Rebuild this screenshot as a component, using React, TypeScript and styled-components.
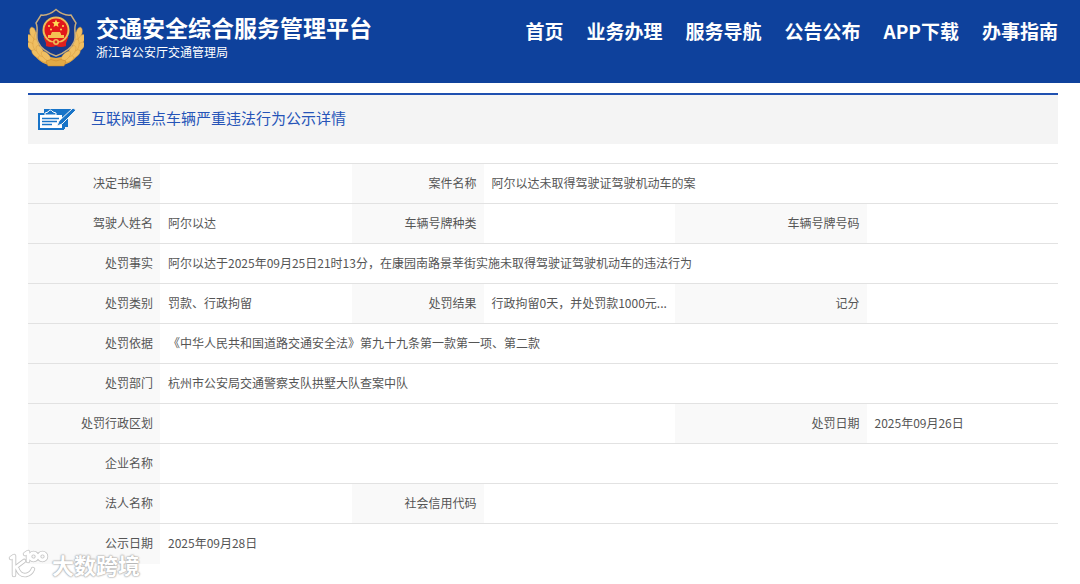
import React from 'react';
import styled, { createGlobalStyle } from 'styled-components';

const GlobalStyle = createGlobalStyle`
  *, *::before, *::after { box-sizing: border-box; }
  body {
    margin: 0;
    background: #fff;
    color: #555;
    font-family: "Noto Sans CJK SC", "Noto Sans", sans-serif;
    font-size: 12px;
    line-height: 16px;
  }
`;

const Page = styled.div`
  position: relative;
  padding-bottom: 22px;
`;

const Header = styled.header`
  display: flex;
  justify-content: space-between;
  align-items: flex-start;
  min-height: 83px;
  padding: 8px 22px 8px 28px;
  background: #0e419c;
  color: #fff;
`;

const Brand = styled.div`
  display: flex;
  gap: 12px;
`;

const BrandText = styled.div`
  padding-top: 3px;
`;

const SiteName = styled.h1`
  margin: 0;
  font-size: 23px;
  line-height: 32px;
  font-weight: 700;
  white-space: nowrap;
`;

const Agency = styled.p`
  margin: 0;
  line-height: 18px;
`;

const Nav = styled.nav`
  display: flex;
  gap: 23px;
  padding-top: 9px;
`;

const NavLink = styled.a`
  color: #fff;
  font-size: 19px;
  line-height: 28px;
  font-weight: 700;
  text-decoration: none;
  white-space: nowrap;
`;

const Main = styled.main`
  padding: 10px 22px 0 28px;
`;

const TitleBar = styled.div`
  display: flex;
  align-items: center;
  gap: 14px;
  height: 51px;
  margin-bottom: 19px;
  padding: 0 9px 2px;
  border-top: 2px solid #1f50b0;
  background: #f4f4f4;
`;

const PageTitle = styled.h2`
  margin: 0;
  padding-bottom: 2px;
  color: #2654b8;
  font-size: 15px;
  line-height: 24px;
  font-weight: 400;
`;

const Table = styled.table`
  width: 100%;
  table-layout: fixed;
  border-collapse: collapse;
`;

const Col = styled.col<{ $narrow: boolean }>`
  width: ${(p) => (p.$narrow ? '132px' : 'auto')};
`;

const Row = styled.tr`
  height: 40px;
  border-top: 1px solid #e2e2e2;
`;

const Label = styled.th`
  padding: 0 7px 1px;
  background: #f9f9f9;
  font-weight: 400;
  text-align: right;
`;

const Value = styled.td`
  padding: 0 4px 1px 8px;
  overflow: hidden;
  text-overflow: ellipsis;
  white-space: nowrap;
`;

const Watermark = styled.div`
  position: absolute;
  left: 6px;
  bottom: 6px;
  display: flex;
  align-items: center;
  gap: 2px;
  color: #fff;
  font-size: 22px;
  line-height: 22px;
  font-weight: 700;
  text-shadow: 0 0 1px #aaa, 0 0 2px #aaa, 0 0 2px #aaa;
`;

const navItems = ['首页', '业务办理', '服务导航', '公告公布', 'APP下载', '办事指南'];
const narrowColumns = [true, false, true, false, false, false];

type Field = { label: string; value?: string; span?: number };

const rows: Field[][] = [
  [{ label: '决定书编号' }, { label: '案件名称', value: '阿尔以达未取得驾驶证驾驶机动车的案', span: 3 }],
  [{ label: '驾驶人姓名', value: '阿尔以达' }, { label: '车辆号牌种类' }, { label: '车辆号牌号码' }],
  [{ label: '处罚事实', value: '阿尔以达于2025年09月25日21时13分，在康园南路景莘街实施未取得驾驶证驾驶机动车的违法行为', span: 5 }],
  [{ label: '处罚类别', value: '罚款、行政拘留' }, { label: '处罚结果', value: '行政拘留0天，并处罚款1000元...' }, { label: '记分' }],
  [{ label: '处罚依据', value: '《中华人民共和国道路交通安全法》第九十九条第一款第一项、第二款', span: 5 }],
  [{ label: '处罚部门', value: '杭州市公安局交通警察支队拱墅大队查案中队', span: 5 }],
  [{ label: '处罚行政区划', span: 3 }, { label: '处罚日期', value: '2025年09月26日' }],
  [{ label: '企业名称', span: 5 }],
  [{ label: '法人名称' }, { label: '社会信用代码', span: 3 }],
  [{ label: '公示日期', value: '2025年09月28日', span: 5 }],
];

const leaves = [
  [5, 25, -15], [3, 32, -30], [4, 39, -42], [9, 46, -55], [16, 51, -70],
  [9, 30, 5], [8, 37, -10], [12, 43, -30], [18, 48, -45],
];

function LeafBranch() {
  return (
    <>
      <path d="M6 24C5 40 13 48 28 50V58C12 58 1 46 3 29Z" fill="#e3a944" />
      {leaves.map(([x, y, angle]) => (
        <ellipse key={`${x}-${y}`} cx={x} cy={y} rx="3" ry="6" transform={`rotate(${angle} ${x} ${y})`} fill="#f0bf62" stroke="#d39439" strokeWidth=".4" />
      ))}
    </>
  );
}

function PoliceEmblem() {
  return (
    <svg width="56" height="60" viewBox="0 0 56 60" aria-hidden="true">
      <LeafBranch />
      <g transform="matrix(-1 0 0 1 56 0)"><LeafBranch /></g>
      <path d="M28 1.5C23 6 17 7.5 13 7L8 15C11 21 7 28 10 34C13 41 20 45 28 48C36 45 43 41 46 34C49 28 45 21 48 15L43 7C39 7.5 33 6 28 1.5Z" fill="#173a8a" stroke="#c9ac7c" strokeWidth="1.5" />
      <path d="M17 30H39L37 35V37L33 36L31 37H25L23 36L19 37V35Z" fill="#d9261f" stroke="#d9261f" strokeWidth="2" />
      <circle cx="28" cy="22" r="13.500" fill="#eebe58" />
      <circle cx="28" cy="22" r="11.500" fill="#e2181b" />
      <path d="M28 11.5l1.100 2.600 2.900.2-2.200 1.800.7 2.800-2.500-1.500-2.500 1.500.7-2.800-2.200-1.800 2.900-.2Z" fill="#ffdc55" />
      <g fill="#ffdc55"><circle cx="21" cy="18" r="1" /><circle cx="23" cy="21.500" r="1" /><circle cx="33" cy="21.500" r="1" /><circle cx="35" cy="18" r="1" /></g>
      <path d="M23 26L24 24H32L33 26V27H36V30H20V27H23Z" fill="#f4c253" />
      <path d="M18 33Q23 36 28 33Q33 36 38 33V38Q33 40 28 38Q23 40 18 38Z" fill="#df201e" />
      <circle cx="28" cy="34" r="3" fill="#eebe58" />
      <circle cx="28" cy="34" r="1.400" fill="#d9261f" />
      <path d="M18 53Q23 50 28 53Q33 50 38 53L36 58H20Z" fill="#e3aa46" stroke="#c98327" strokeWidth=".5" />
    </svg>
  );
}

function FormIcon() {
  return (
    <svg width="40" height="24" viewBox="0 0 40 24" aria-hidden="true">
      <path d="M7 2H35L31 8V20H28V22H7Z" fill="#1874c8" />
      <path d="M2 7H26V22H2Z" fill="#fff" stroke="#1874c8" strokeWidth="2" />
      <path d="M8 8V6L11 5Q13 1 16 5L19 6V8Z" fill="#1874c8" stroke="#fff" strokeWidth="1" />
      <path d="M5 11.500H22M5 14.500H20M5 17.500H15" stroke="#1874c8" strokeWidth="1.300" />
      <path d="M20 19L22 14L36 1L39 3L25 17Z" fill="#1874c8" stroke="#f4f4f4" strokeWidth="1" />
    </svg>
  );
}

function WatermarkLogo() {
  const lines = 'M5 10L8 8V27M18 13L10 19M11 20Q14 28 20 27Q25 26 27 21M19 6L22 4V13M24 8.5A3.500 3.500 0 1 1 31 8.5A3.500 3.500 0 1 1 24 8.5M33 8.5A3.500 3.500 0 1 1 40 8.5A3.500 3.500 0 1 1 33 8.5M30 6L34 11M34 6L30 11';
  return (
    <svg width="44" height="32" viewBox="0 0 44 32" fill="none" strokeLinecap="round" strokeLinejoin="round" aria-hidden="true">
      <path d={lines} stroke="#c4c4c4" strokeWidth="4.500" />
      <path d={lines} stroke="#fff" strokeWidth="2.800" />
    </svg>
  );
}

export default function App() {
  return (
    <Page>
      <GlobalStyle />
      <Header>
        <Brand>
          <PoliceEmblem />
          <BrandText>
            <SiteName>交通安全综合服务管理平台</SiteName>
            <Agency>浙江省公安厅交通管理局</Agency>
          </BrandText>
        </Brand>
        <Nav>
          {navItems.map((item) => <NavLink key={item} href="#">{item}</NavLink>)}
        </Nav>
      </Header>
      <Main>
        <TitleBar>
          <FormIcon />
          <PageTitle>互联网重点车辆严重违法行为公示详情</PageTitle>
        </TitleBar>
        <Table>
          <colgroup>{narrowColumns.map((narrow, i) => <Col key={i} $narrow={narrow} />)}</colgroup>
          <tbody>
            {rows.map((fields) => (
              <Row key={fields[0].label}>
                {fields.map(({ label, value, span }) => (
                  <React.Fragment key={label}>
                    <Label scope="row">{label}</Label>
                    <Value colSpan={span}>{value}</Value>
                  </React.Fragment>
                ))}
              </Row>
            ))}
          </tbody>
        </Table>
      </Main>
      <Watermark><WatermarkLogo />大数跨境</Watermark>
    </Page>
  );
}
